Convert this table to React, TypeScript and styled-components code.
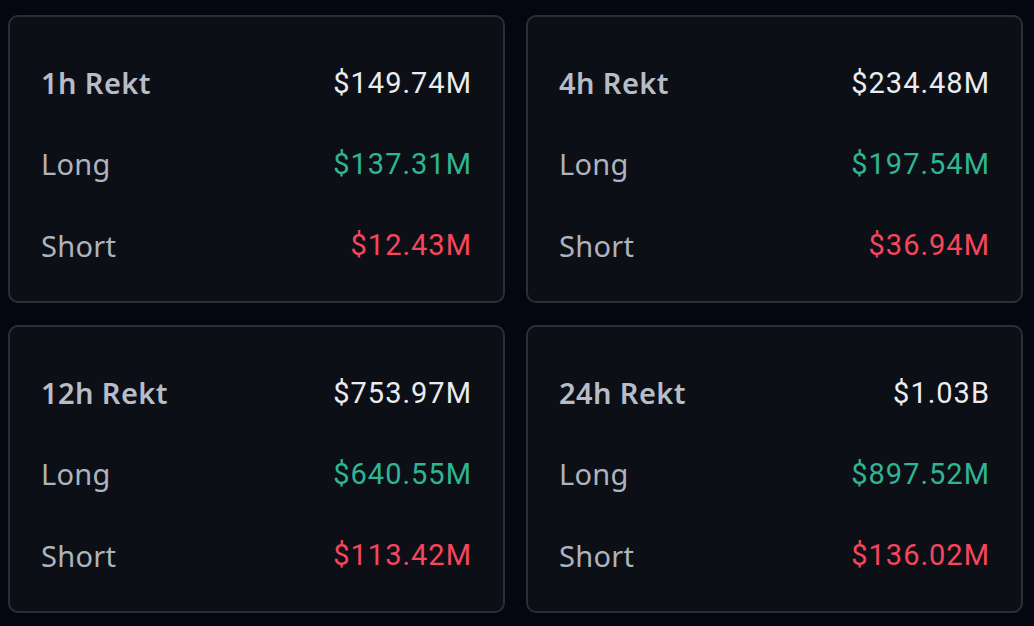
import styled, { createGlobalStyle } from "styled-components";

const GlobalStyle = createGlobalStyle`
  html, body {
    margin: 0;
    padding: 0;
    background: #050710;
  }
  body {
    font-family: "Noto Sans", "Liberation Sans", sans-serif;
  }
`;

type Stat = {
  period: string;
  total: string;
  long: string;
  short: string;
};

const stats: Stat[] = [
  { period: "1h", total: "$149.74M", long: "$137.31M", short: "$12.43M" },
  { period: "4h", total: "$234.48M", long: "$197.54M", short: "$36.94M" },
  { period: "12h", total: "$753.97M", long: "$640.55M", short: "$113.42M" },
  { period: "24h", total: "$1.03B", long: "$897.52M", short: "$136.02M" },
];

const Page = styled.div`
  width: 1034px;
  height: 626px;
  box-sizing: border-box;
  padding: 15px 12px 0 8px;
  display: grid;
  grid-template-columns: 497px 497px;
  grid-template-rows: 288px 288px;
  column-gap: 21px;
  row-gap: 22px;
  background: #050710;
`;

const Card = styled.div`
  box-sizing: border-box;
  border: 2px solid #2a2e36;
  border-radius: 10px;
  background: #0d0f16;
  padding: 25px 32px 15px 31px;
  display: flex;
  flex-direction: column;
`;

const Row = styled.div`
  height: 82px;
  display: flex;
  align-items: center;
  justify-content: space-between;
`;

const Label = styled.span<{ $strong?: boolean }>`
  font-size: 29px;
  font-weight: ${(p) => (p.$strong ? 600 : 400)};
  letter-spacing: ${(p) => (p.$strong ? "0.4px" : "0.3px")};
  color: ${(p) => (p.$strong ? "#b7bdc6" : "#aeb4bd")};
`;

const Value = styled.span<{ $tone: "total" | "long" | "short" }>`
  font-family: "Roboto", "Noto Sans", sans-serif;
  font-size: 29px;
  letter-spacing: 1px;
  margin-right: -1px;
  color: ${(p) =>
    p.$tone === "long" ? "#2eb592" : p.$tone === "short" ? "#f6465d" : "#eaecef"};
`;

export default function App() {
  return (
    <>
      <GlobalStyle />
      <Page>
        {stats.map((s) => (
          <Card key={s.period}>
            <Row>
              <Label $strong>{s.period} Rekt</Label>
              <Value $tone="total">{s.total}</Value>
            </Row>
            <Row>
              <Label>Long</Label>
              <Value $tone="long">{s.long}</Value>
            </Row>
            <Row>
              <Label>Short</Label>
              <Value $tone="short">{s.short}</Value>
            </Row>
          </Card>
        ))}
      </Page>
    </>
  );
}
